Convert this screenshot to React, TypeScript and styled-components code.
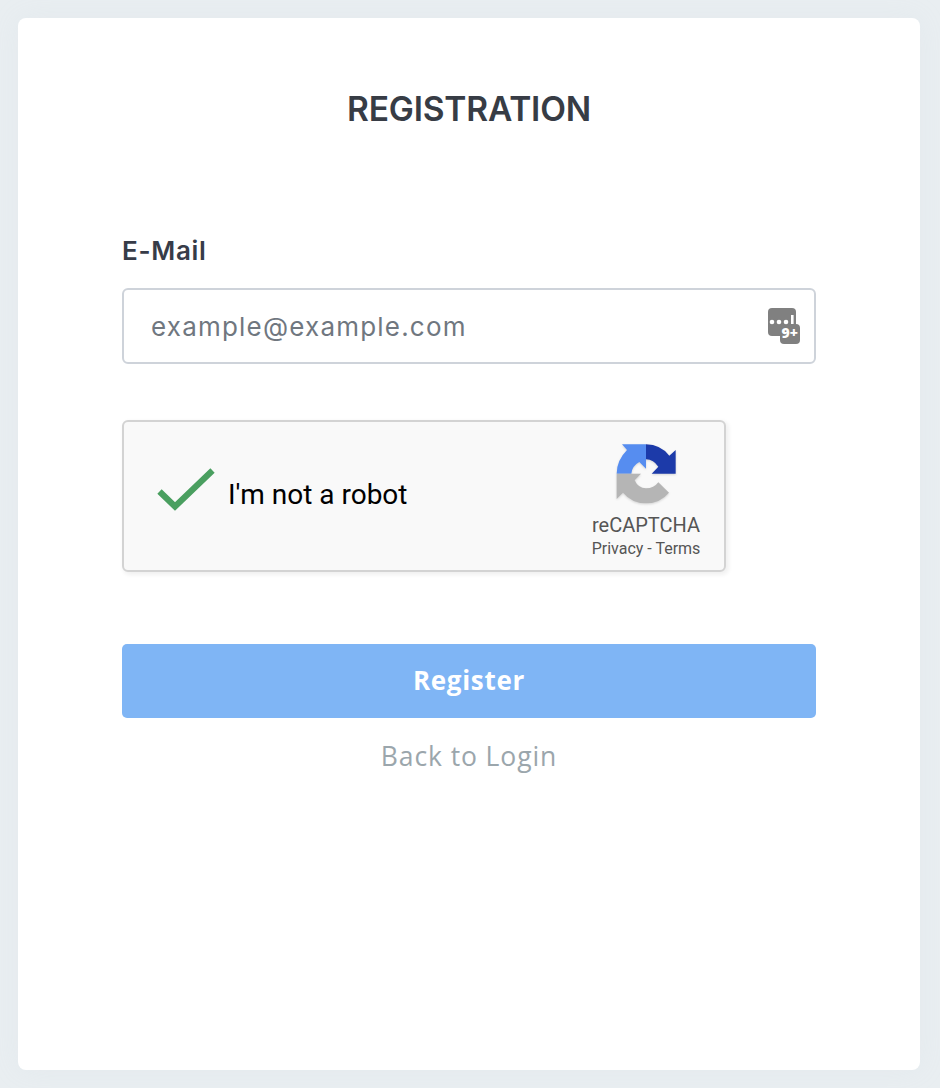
import React from 'react';
import styled, { createGlobalStyle } from 'styled-components';

const GlobalStyle = createGlobalStyle`
  *, *::before, *::after { box-sizing: border-box; }
  body { margin: 0; background: #e9eef1; font-family: Inter, Roboto, sans-serif; }
`;

const Page = styled.main`
  min-height: 1088px;
  padding: 18px 20px 18px 18px;
  display: flex;
`;

const Card = styled.section`
  flex: 1;
  padding: 69px 104px 0;
  background: #fff;
  border-radius: 8px;
  box-shadow: 0 0 30px rgba(200, 215, 225, 0.12);
`;

const Title = styled.h1`
  margin: 0 0 105px;
  text-align: center;
  font: 600 33.5px/44px Inter, sans-serif;
  letter-spacing: -0.2px;
  color: #373c45;
`;

const Form = styled.form`
  display: flex;
  flex-direction: column;
`;

const Label = styled.label`
  margin-bottom: 22px;
  font: 600 26px/30px Inter, sans-serif;
  letter-spacing: 0.7px;
  color: #373c48;
`;

const Field = styled.div`
  display: flex;
  align-items: center;
  height: 76px;
  padding: 0 13px 0 27px;
  border: 2px solid #ced3da;
  border-radius: 6px;
`;

const Input = styled.input`
  flex: 1;
  min-width: 0;
  padding: 2px 0 0;
  border: 0;
  outline: 0;
  background: transparent;
  font: 400 26px/40px Inter, sans-serif;
  letter-spacing: 1.2px;
  &::placeholder { color: #70777f; opacity: 1; }
`;

const Captcha = styled.div`
  display: flex;
  align-items: center;
  width: 604px;
  height: 152px;
  margin-top: 56px;
  padding-left: 31px;
  background: #f9f9f9;
  border: 2px solid #d3d3d3;
  border-radius: 6px;
  box-shadow: 2px 2px 4px 1px rgba(0, 0, 0, 0.06);
`;

const CaptchaText = styled.span`
  flex: 1;
  margin: -3px 0 0 13px;
  font: 400 28px/34px Roboto, sans-serif;
  letter-spacing: 0;
  color: #000;
`;

const Brand = styled.div`
  display: flex;
  flex-direction: column;
  align-items: center;
  align-self: flex-start;
  width: 110px;
  margin: 8px 23px 0 0;
  color: #555;
  white-space: nowrap;
`;

const BrandName = styled.span`
  margin-top: 2px;
  font: 400 20px/26px Roboto, sans-serif;
`;

const BrandLinks = styled.span`
  margin-top: 1px;
  font: 400 16px/20px Roboto, sans-serif;
`;

const Submit = styled.button`
  height: 74px;
  margin: 72px 0 0;
  padding: 0 0 2px;
  border: 0;
  border-radius: 5px;
  background: #7fb5f5;
  color: #fff;
  font: 700 26px/72px 'Open Sans', sans-serif;
  letter-spacing: 0.7px;
`;

const BackLink = styled.a`
  align-self: center;
  margin-top: 18px;
  font: 400 26.5px/40px 'Open Sans', sans-serif;
  letter-spacing: 0.9px;
  color: #9ba6ac;
`;

const PasswordManagerIcon = () => (
  <svg width="34" height="38" viewBox="0 0 34 38">
    <rect x="1" y="1" width="28" height="28" rx="4" fill="#808080" />
    <rect x="13" y="17" width="20" height="20" rx="4" fill="#808080" />
    <circle cx="5" cy="15" r="2.3" fill="#fff" />
    <circle cx="12" cy="15" r="2.3" fill="#fff" />
    <circle cx="19" cy="15" r="2.3" fill="#fff" />
    <path d="M25.3 8v9" stroke="#fff" strokeWidth="2.6" />
    <text x="22.8" y="31.4" textAnchor="middle" fontFamily="Open Sans, sans-serif" fontWeight="800" fontSize="14" fill="#fff">9+</text>
  </svg>
);

const CheckIcon = () => (
  <svg width="60" height="48" viewBox="0 0 60 48">
    <path d="M5 19 20.5 34 58 -2" transform="translate(-.5 .5)" fill="none" stroke="#4a9f60" strokeWidth="6.2" overflow="visible" />
  </svg>
);

const CheckMark = styled(CheckIcon)``;

const CheckSlot = styled.div`
  display: flex;
  svg { overflow: visible; }
`;

const LogoSlot = styled.div`
  display: flex;
  margin-right: 2px;
  svg { filter: drop-shadow(0 1px 1px rgba(0, 0, 0, 0.15)); }
`;

const CaptchaLogo = () => (
  <svg width="90" height="80" viewBox="0 0 270 240">
    <path d="M66 43H138V116L118 96Q96 108 94 131H50Q50 91 81 60Z" fill="#568df0" />
    <path d="M138 43Q182 44 208 77L227 60V131H155L175 110Q161 89 138 88Z" fill="#1c3aa9" />
    <path d="M50 131H123L104 151Q114 174 138 175Q162 175 175 157L207 188Q180 220 138 220Q96 220 69 188L50 207Z" fill="#b5b5b5" />
  </svg>
);

export default function App() {
  return (
    <>
      <GlobalStyle />
      <Page>
        <Card>
          <Title>REGISTRATION</Title>
          <Form>
            <Label htmlFor="email">E-Mail</Label>
            <Field>
              <Input id="email" type="email" placeholder="example@example.com" />
              <PasswordManagerIcon />
            </Field>
            <Captcha>
              <CheckSlot><CheckMark /></CheckSlot>
              <CaptchaText>I'm not a robot</CaptchaText>
              <Brand>
                <LogoSlot><CaptchaLogo /></LogoSlot>
                <BrandName>reCAPTCHA</BrandName>
                <BrandLinks>Privacy - Terms</BrandLinks>
              </Brand>
            </Captcha>
            <Submit type="button">Register</Submit>
            <BackLink>Back to Login</BackLink>
          </Form>
        </Card>
      </Page>
    </>
  );
}
